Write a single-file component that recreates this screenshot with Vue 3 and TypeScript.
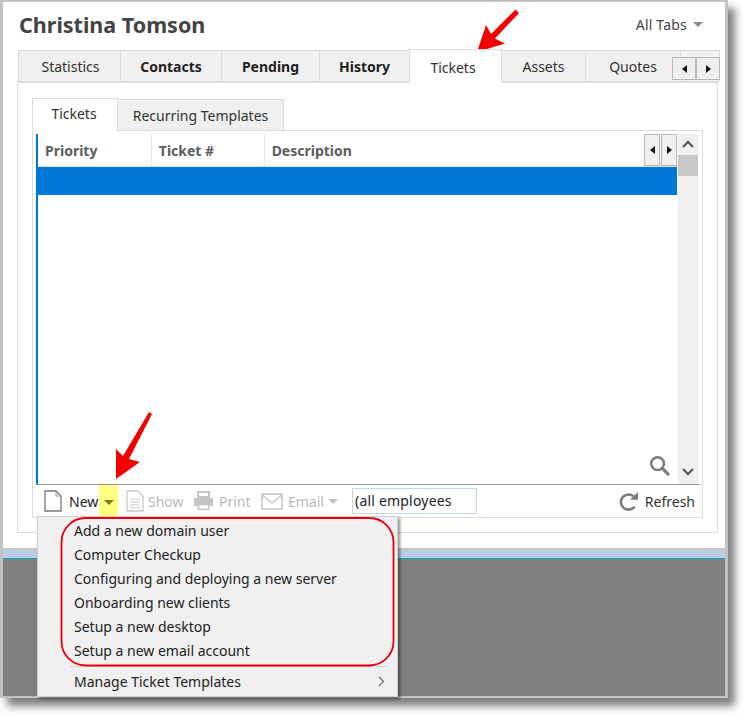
<script setup lang="ts">
interface Tab { label: string; width: number; bold?: boolean; active?: boolean }
const tabs: Tab[] = [
  { label: 'Statistics', width: 103 },
  { label: 'Contacts', width: 101, bold: true },
  { label: 'Pending', width: 98, bold: true },
  { label: 'History', width: 90, bold: true },
  { label: 'Tickets', width: 93, active: true },
  { label: 'Assets', width: 84 },
  { label: 'Quotes', width: 95 },
]
const columns = [
  { label: 'Priority', width: 114 },
  { label: 'Ticket #', width: 113 },
  { label: 'Description', width: 380 },
]
const templates = [
  'Add a new domain user',
  'Computer Checkup',
  'Configuring and deploying a new server',
  'Onboarding new clients',
  'Setup a new desktop',
  'Setup a new email account',
]
</script>

<template>
  <div class="page">
    <div class="window">
      <div class="content">
        <header class="head">
          <h1 class="title">Christina Tomson</h1>
          <div class="all-tabs">All Tabs <span class="caret gray"></span></div>
        </header>

        <div class="tabs">
          <div
            v-for="t in tabs"
            :key="t.label"
            class="tab"
            :class="{ bold: t.bold, active: t.active }"
            :style="{ width: t.width + 'px' }"
          >{{ t.label }}</div>
          <div class="tab filler"></div>
          <div class="tab-arrows">
            <button class="arrow-btn"><span class="tri left"></span></button>
            <button class="arrow-btn"><span class="tri right"></span></button>
          </div>
        </div>

        <section class="panel">
          <div class="subtabs">
            <div class="subtab active">Tickets</div>
            <div class="subtab">Recurring Templates</div>
          </div>

          <div class="grid-box">
            <div class="grid-area">
              <div class="table">
                <div class="thead">
                  <div
                    v-for="c in columns"
                    :key="c.label"
                    class="th"
                    :style="{ width: c.width + 'px' }"
                  >{{ c.label }}</div>
                  <div class="th-arrows">
                    <button class="th-btn"><span class="tri left"></span></button>
                    <button class="th-btn"><span class="tri right"></span></button>
                  </div>
                </div>
                <div class="row-selected"></div>
                <div class="tbody">
                  <svg class="search" width="21" height="21" viewBox="0 0 22 22">
                    <circle cx="9" cy="9" r="6.7" fill="none" stroke="#7b7b7b" stroke-width="2.6" />
                    <path d="M14 14l6 6" stroke="#7b7b7b" stroke-width="3.2" stroke-linecap="round" />
                  </svg>
                </div>
              </div>
              <div class="scrollbar">
                <svg class="chev" width="14" height="21" viewBox="0 0 14 21">
                  <path d="M2 13l5-5 5 5" fill="none" stroke="#555" stroke-width="2" />
                </svg>
                <div class="thumb"></div>
                <div class="spacer"></div>
                <svg class="chev" width="14" height="21" viewBox="0 0 14 21">
                  <path d="M2 6l5 5 5-5" fill="none" stroke="#555" stroke-width="2" />
                </svg>
              </div>
            </div>

            <div class="toolbar">
              <svg class="ic-new" width="18" height="22" viewBox="0 0 18 22">
                <path d="M1 1h11l5 5v15H1z" fill="#fff" stroke="#777" stroke-width="1.3" />
                <path d="M12 1v5h5" fill="none" stroke="#999" stroke-width="1" />
              </svg>
              <span class="tb-text new">New</span>
              <span class="yellow"><span class="caret dark"></span></span>
              <svg class="ic-show" width="18" height="22" viewBox="0 0 18 22">
                <path d="M1 1h11l5 5v15H1z" fill="#fff" stroke="#c9c9c9" stroke-width="1.3" />
                <path d="M4 9h10M4 12h10M4 15h10M4 18h10" stroke="#c9c9c9" stroke-width="1.2" />
              </svg>
              <span class="tb-text off show">Show</span>
              <svg class="ic-print" width="21" height="20" viewBox="0 0 21 20">
                <path d="M5 1h11v5H5z" fill="none" stroke="#c4c4c4" stroke-width="2" />
                <path d="M1 7h19v8h-4v-2H5v2H1z" fill="#c4c4c4" />
                <path d="M5.5 13.5h10v5h-10z" fill="none" stroke="#c4c4c4" stroke-width="1.6" />
              </svg>
              <span class="tb-text off print">Print</span>
              <svg class="ic-mail" width="22" height="17" viewBox="0 0 22 17">
                <rect x="1" y="1" width="20" height="15" fill="#fff" stroke="#c9c9c9" stroke-width="1.6" />
                <path d="M1.5 2l9.5 8 9.5-8" fill="none" stroke="#c9c9c9" stroke-width="1.6" />
              </svg>
              <span class="tb-text off email">Email</span>
              <span class="caret light"></span>
              <div class="emp-input">(all employees</div>
              <div class="refresh">
                <svg width="20" height="20" viewBox="0 0 20 20">
                  <path d="M15.6 14.6A7.6 7.6 0 1 1 14.6 4.4" fill="none" stroke="#7b7b7b" stroke-width="2.6" />
                  <path d="M11 7.8h8V0z" fill="#7b7b7b" />
                </svg>
                <span class="tb-text">Refresh</span>
              </div>
            </div>
          </div>
        </section>
      </div>
      <div class="strip"></div>
      <div class="dark-area"></div>
    </div>

    <div class="menu">
      <div v-for="m in templates" :key="m" class="menu-item">{{ m }}</div>
      <div class="menu-sep"></div>
      <div class="menu-manage">
        <span>Manage Ticket Templates</span>
        <svg width="7" height="11" viewBox="0 0 7 11">
          <path d="M1 1l4.5 4.5L1 10" fill="none" stroke="#666" stroke-width="1.1" />
        </svg>
      </div>
    </div>

    <svg class="notes" width="743" height="715" viewBox="0 0 743 715">
      <polygon points="515.5,9.5 519,13 495,38.5 505,43.5 477,52 486,25 491,34" fill="#f40000" />
      <polygon points="149,412 152,414 129,459 140,462 116,479 116,449 123,456" fill="#f40000" />
      <rect x="61.5" y="518" width="332" height="147.500" rx="24" fill="none" stroke="#e8000f" stroke-width="1.8" />
    </svg>
  </div>
</template>

<style>
html, body { margin: 0; background: #fff; }
</style>

<style scoped>
.page {
  position: relative;
  width: 743px;
  height: 715px;
  overflow: hidden;
  background: #fff;
  font-family: "Noto Sans", "Open Sans", sans-serif;
  font-size: 14px;
  color: #222;
}
.window {
  width: 728px;
  height: 698px;
  box-sizing: border-box;
  display: flex;
  flex-direction: column;
  border-style: solid;
  border-color: #c2c2c2;
  border-width: 2px 3px 2px 3px;
  box-shadow: 7px 8px 8px rgba(0, 0, 0, 0.5);
  background: #fff;
}
.content {
  height: 549px;
  flex: none;
  padding: 0 7px 0 14px;
  box-sizing: border-box;
  border-bottom: 3px solid #c8c8c8;
}
.head {
  height: 47px;
  display: flex;
  justify-content: space-between;
  align-items: center;
  padding-left: 2px;
  padding-right: 15px;
}
.title {
  margin: 0;
  font-size: 21.5px;
  font-weight: 700;
  color: #444;
  position: relative;
  top: -1px;
}
.all-tabs {
  color: #444;
  font-size: 14px;
  letter-spacing: 0.2px;
  display: flex;
  align-items: center;
  gap: 6px;
  position: relative;
  top: -1px;
}
.caret {
  display: inline-block;
  width: 0;
  height: 0;
  border-left: 5px solid transparent;
  border-right: 5px solid transparent;
  border-top: 5px solid #8a8a8a;
}
.caret.dark { border-top-color: #7d7c12; }
.caret.light { border-top-color: #c4c4c4; margin-left: 4px; }
.tabs {
  display: flex;
  align-items: flex-end;
  height: 33px;
  position: relative;
  margin-left: 1px;
  width: 702px;
}
.tab {
  height: 32px;
  box-sizing: border-box;
  padding-top: 1px;
  background: #f0f0f0;
  border: 1px solid #dcdcdc;
  border-left: 0;
  display: flex;
  align-items: center;
  justify-content: center;
  color: #333;
  font-size: 14px;
}
.tab:first-child {
  border-left: 1px solid #dcdcdc;
  padding-left: 2px;
}
.tab.bold { font-weight: 700; color: #222; }
.tab.filler { flex: 1; }
.tab.active {
  height: 34px;
  padding-top: 3px;
  padding-right: 5px;
  background: #fff;
  border-left: 1px solid #dcdcdc;
  border-bottom-color: #fff;
  position: relative;
  z-index: 1;
  margin-left: -1px;
  margin-bottom: -1px;
}
.tab-arrows {
  position: absolute;
  right: 0;
  top: 8px;
  display: flex;
  z-index: 2;
}
.arrow-btn {
  width: 24px;
  height: 23px;
  padding: 0;
  background: #f0f0f0;
  border: 1px solid #b8b8b8;
  display: flex;
  align-items: center;
  justify-content: center;
}
.tri {
  display: block;
  width: 0;
  height: 0;
  border-top: 4px solid transparent;
  border-bottom: 4px solid transparent;
}
.tri.left { border-right: 5px solid #111; }
.tri.right { border-left: 5px solid #111; }
.panel {
  width: 701px;
  height: 451px;
  box-sizing: border-box;
  border: 1px solid #dcdcdc;
  padding: 14px 14px 0 14px;
}
.subtabs {
  display: flex;
  align-items: flex-end;
  height: 34px;
}
.subtab {
  width: 166px;
  height: 32px;
  box-sizing: border-box;
  background: #f0f0f0;
  border: 1px solid #dcdcdc;
  border-left: 0;
  display: flex;
  align-items: center;
  justify-content: center;
  color: #333;
}
.subtab.active {
  width: 86px;
  height: 34px;
  background: #fff;
  border-left: 1px solid #dcdcdc;
  border-bottom-color: #fff;
  position: relative;
  z-index: 1;
  margin-bottom: -1px;
  padding-bottom: 3px;
  padding-right: 2px;
}
.grid-box {
  width: 671px;
  height: 388px;
  box-sizing: border-box;
  border: 1px solid #dcdcdc;
  padding-top: 3px;
  padding-left: 3px;
  margin-top: -1px;
  display: flex;
  flex-direction: column;
}
.grid-area {
  flex: none;
  height: 351px;
  width: 664px;
  display: flex;
  border-bottom: 1px solid #9a9a9a;
  box-sizing: border-box;
}
.table {
  width: 641px;
  display: flex;
  flex-direction: column;
  border-left: 2px solid #0078d7;
  box-sizing: border-box;
}
.thead {
  height: 33px;
  flex: none;
  display: flex;
  box-sizing: border-box;
  border-bottom: 1px solid #e0e0e0;
}
.th {
  box-sizing: border-box;
  border-right: 1px solid #e6e6e6;
  padding-left: 7px;
  font-weight: 700;
  color: #5c5c5c;
  line-height: 34px;
}
.th:nth-child(3) { border-right: 0; }
.th-arrows { display: flex; gap: 1px; margin-left: auto; }
.th-btn {
  width: 16px;
  height: 32px;
  padding: 0;
  background: #f0f0f0;
  border: 1px solid #b8b8b8;
  display: flex;
  align-items: center;
  justify-content: center;
}
.row-selected {
  height: 28px;
  flex: none;
  margin-left: -2px;
  background: #0078d7;
}
.tbody {
  flex: 1;
  position: relative;
}
.search { position: absolute; right: 7px; bottom: 8px; }
.scrollbar {
  width: 20px;
  margin-left: 1px;
  background: #f0f0f0;
  display: flex;
  flex-direction: column;
  align-items: center;
}
.chev { flex: none; }
.thumb {
  width: 100%;
  height: 21px;
  flex: none;
  background: #c8c8c8;
}
.spacer { flex: 1; }
.toolbar {
  height: 32px;
  flex: none;
  display: flex;
  align-items: center;
  padding-left: 8px;
  width: 664px;
  box-sizing: border-box;
}
.tb-text { color: #333; font-size: 14px; white-space: nowrap; }
.tb-text.off { color: #b9b9b9; }
.tb-text.new { margin-left: 7px; width: 30px; color: #222; }
.yellow {
  width: 19px;
  height: 34px;
  background: #ffff80;
  display: flex;
  align-items: center;
  justify-content: center;
  margin-top: 0;
  margin-bottom: -2px;
  flex: none;
}
.ic-show { margin-left: 8px; flex: none; }
.show { margin-left: 4px; width: 41px; }
.ic-print { margin-left: 4px; flex: none; }
.print { margin-left: 5px; width: 37px; }
.ic-mail { margin-left: 5px; flex: none; }
.email { margin-left: 5px; width: 36px; }
.emp-input {
  width: 125px;
  height: 26px;
  box-sizing: border-box;
  margin-left: 14px;
  border: 1px solid #c5d6e6;
  background: #fff;
  padding-left: 2px;
  line-height: 24px;
  color: #222;
  letter-spacing: 0.2px;
}
.refresh {
  margin-left: auto;
  margin-right: 5px;
  display: flex;
  align-items: center;
  gap: 6px;
  margin-top: 1px;
}
.strip {
  height: 7px;
  flex: none;
  background: #b7cfe8;
  border-bottom: 1px solid #12a9c9;
}
.dark-area {
  flex: 1;
  background: #7f7f7f;
}
.menu {
  position: absolute;
  left: 37px;
  top: 516px;
  width: 361px;
  height: 181px;
  box-sizing: border-box;
  padding: 3px 0 0 36px;
  background: #f0f0f0;
  border: 1px solid #d0d0d0;
  box-shadow: 2px 2px 3px rgba(0, 0, 0, 0.45);
}
.menu-item {
  height: 24px;
  line-height: 22px;
  color: #222;
  font-size: 14px;
  white-space: nowrap;
}
.menu-sep {
  height: 1px;
  background: #d4d4d4;
  margin: 2px 10px 0 -4px;
}
.menu-manage {
  display: flex;
  justify-content: space-between;
  align-items: center;
  height: 28px;
  padding-right: 12px;
}
.notes {
  position: absolute;
  left: 0;
  top: 0;
  pointer-events: none;
}
</style>
